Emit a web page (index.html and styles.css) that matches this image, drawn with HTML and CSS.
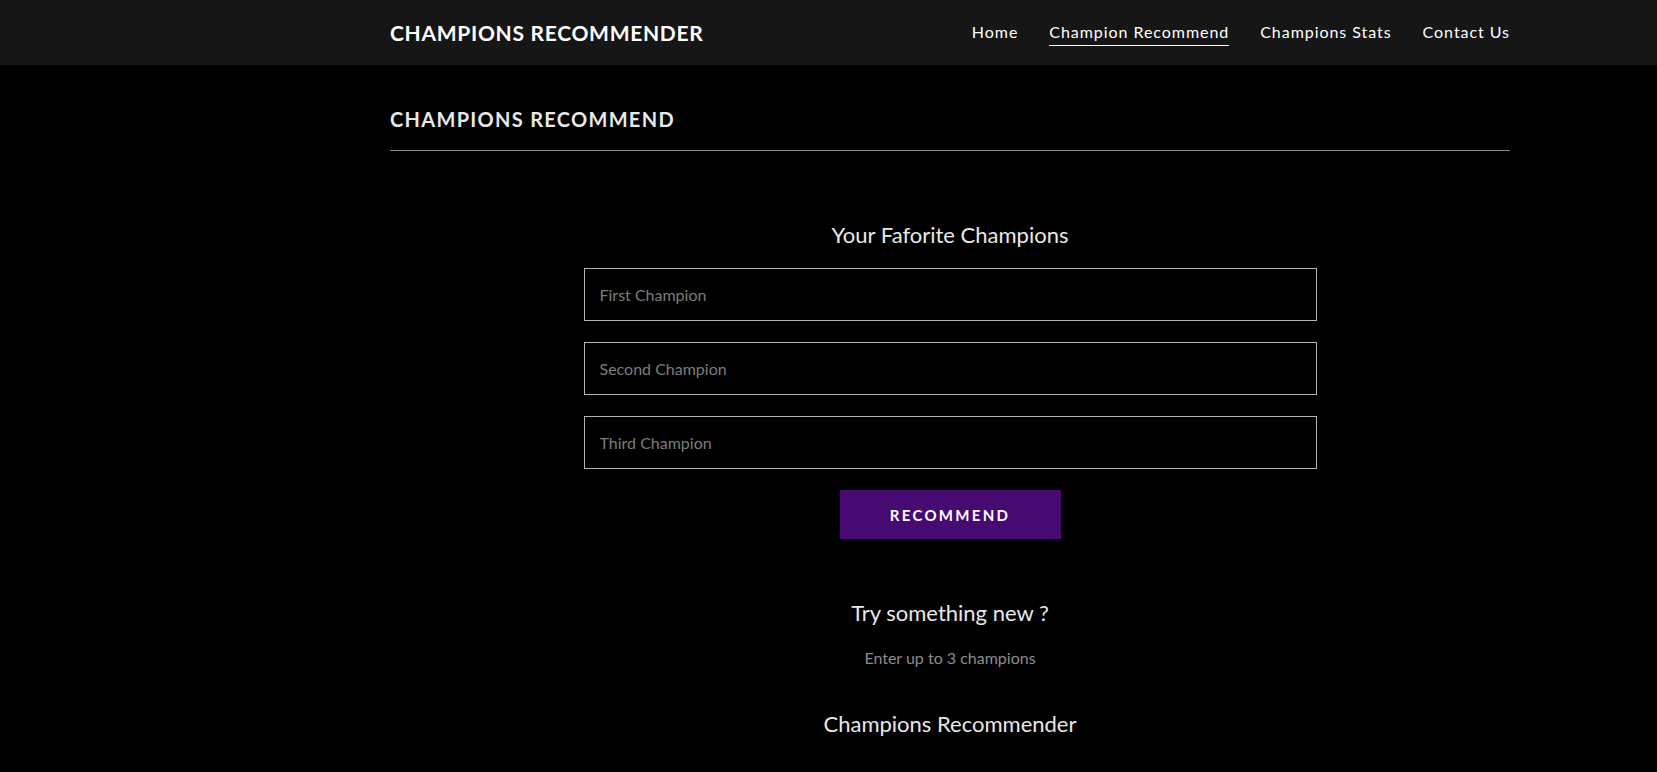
FILE: index.html
```html
<!DOCTYPE html>
<html lang="en">
<head>
<meta charset="utf-8">
<title>Champions Recommender</title>
<link rel="stylesheet" href="styles.css">
</head>
<body>
<header class="topbar">
  <div class="wrap topbar-inner">
    <div class="brand">CHAMPIONS RECOMMENDER</div>
    <nav class="nav">
      <a class="nav-link" href="#">Home</a>
      <a class="nav-link active" href="#">Champion Recommend</a>
      <a class="nav-link" href="#">Champions Stats</a>
      <a class="nav-link" href="#">Contact Us</a>
    </nav>
  </div>
</header>
<main class="wrap">
  <h1 class="page-title">CHAMPIONS RECOMMEND</h1>
  <hr class="rule">
  <section class="form-area">
    <h2 class="form-title">Your Faforite Champions</h2>
    <form class="champ-form">
      <input class="field" type="text" placeholder="First Champion">
      <input class="field" type="text" placeholder="Second Champion">
      <input class="field" type="text" placeholder="Third Champion">
      <button class="btn" type="button">RECOMMEND</button>
    </form>
    <h3 class="sub-title">Try something new ?</h3>
    <p class="hint">Enter up to 3 champions</p>
    <h3 class="sub-title last">Champions Recommender</h3>
  </section>
</main>
</body>
</html>
```

FILE: styles.css
```css
* { box-sizing: border-box; }
html, body { margin: 0; padding: 0; }
body {
  background: #000;
  color: #e6e6e6;
  font-family: Lato, "Open Sans", sans-serif;
  overflow: hidden;
}
.wrap {
  width: 1120px;
  margin-left: 390px;
}
.topbar {
  background: #161616;
  height: 65px;
}
.topbar-inner {
  height: 100%;
  display: flex;
  align-items: center;
  justify-content: space-between;
}
.brand {
  font-size: 21px;
  font-weight: 700;
  letter-spacing: 0.7px;
  color: #fff;
}
.nav {
  display: flex;
  gap: 31px;
  align-items: center;
}
.nav-link {
  color: #fff;
  text-decoration: none;
  font-size: 16px;
  letter-spacing: 0.95px;
  padding: 3px 0 4px;
  border-bottom: 1px solid transparent;
}
.nav-link.active {
  border-bottom-color: #fff;
}
.page-title {
  margin: 42px 0 0;
  font-size: 20px;
  line-height: 24px;
  font-weight: 700;
  letter-spacing: 1.3px;
  color: #e8e8e8;
}
.rule {
  margin: 19px 0 0;
  border: 0;
  border-top: 1px solid #8a8a8a;
}
.form-area {
  display: flex;
  flex-direction: column;
  align-items: center;
}
.form-title {
  margin: 71px 0 0;
  font-size: 22px;
  line-height: 26px;
  font-weight: 400;
  color: #e8e8e8;
}
.champ-form {
  width: 733px;
  margin-top: 20px;
  display: flex;
  flex-direction: column;
  align-items: center;
  gap: 21px;
}
.field {
  width: 100%;
  height: 53px;
  background: #000;
  border: 1px solid #b4b4b4;
  padding: 0 15px;
  font-family: inherit;
  font-size: 16px;
  color: #ddd;
  outline: none;
}
.field::placeholder { color: #7c7c7c; }
.btn {
  width: 221px;
  height: 49px;
  background: #470a73;
  border: 0;
  color: #fff;
  font-family: inherit;
  font-size: 15px;
  font-weight: 700;
  letter-spacing: 2.3px;
}
.sub-title {
  margin: 61px 0 0;
  font-size: 22px;
  line-height: 26px;
  font-weight: 400;
  color: #e8e8e8;
}
.hint {
  margin: 22px 0 0;
  font-size: 16px;
  line-height: 19px;
  color: #8c8c8c;
}
.sub-title.last {
  margin-top: 44px;
}
```
